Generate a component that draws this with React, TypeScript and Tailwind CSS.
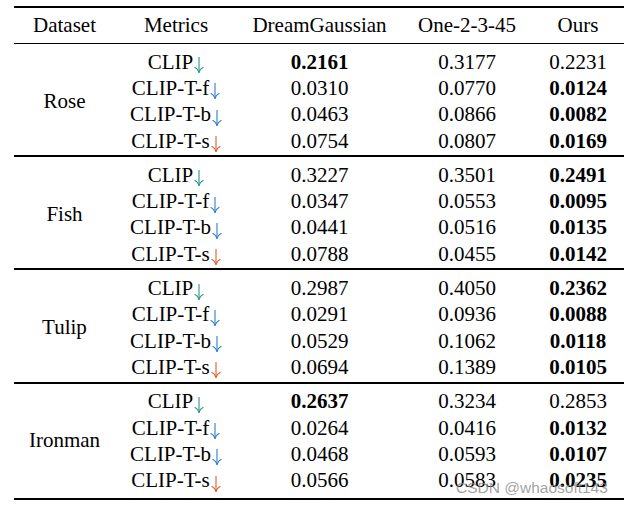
type Metric = "CLIP" | "CLIP-T-f" | "CLIP-T-b" | "CLIP-T-s";

const arrowColor: Record<Metric, string> = {
  CLIP: "text-[#2a9488]",
  "CLIP-T-f": "text-[#2f7fc6]",
  "CLIP-T-b": "text-[#2f7fc6]",
  "CLIP-T-s": "text-[#dd5d28]",
};

type Row = { metric: Metric; values: string[]; best: number };

const groups: { name: string; rows: Row[] }[] = [
  {
    name: "Rose",
    rows: [
      { metric: "CLIP", values: ["0.2161", "0.3177", "0.2231"], best: 0 },
      { metric: "CLIP-T-f", values: ["0.0310", "0.0770", "0.0124"], best: 2 },
      { metric: "CLIP-T-b", values: ["0.0463", "0.0866", "0.0082"], best: 2 },
      { metric: "CLIP-T-s", values: ["0.0754", "0.0807", "0.0169"], best: 2 },
    ],
  },
  {
    name: "Fish",
    rows: [
      { metric: "CLIP", values: ["0.3227", "0.3501", "0.2491"], best: 2 },
      { metric: "CLIP-T-f", values: ["0.0347", "0.0553", "0.0095"], best: 2 },
      { metric: "CLIP-T-b", values: ["0.0441", "0.0516", "0.0135"], best: 2 },
      { metric: "CLIP-T-s", values: ["0.0788", "0.0455", "0.0142"], best: 2 },
    ],
  },
  {
    name: "Tulip",
    rows: [
      { metric: "CLIP", values: ["0.2987", "0.4050", "0.2362"], best: 2 },
      { metric: "CLIP-T-f", values: ["0.0291", "0.0936", "0.0088"], best: 2 },
      { metric: "CLIP-T-b", values: ["0.0529", "0.1062", "0.0118"], best: 2 },
      { metric: "CLIP-T-s", values: ["0.0694", "0.1389", "0.0105"], best: 2 },
    ],
  },
  {
    name: "Ironman",
    rows: [
      { metric: "CLIP", values: ["0.2637", "0.3234", "0.2853"], best: 0 },
      { metric: "CLIP-T-f", values: ["0.0264", "0.0416", "0.0132"], best: 2 },
      { metric: "CLIP-T-b", values: ["0.0468", "0.0593", "0.0107"], best: 2 },
      { metric: "CLIP-T-s", values: ["0.0566", "0.0583", "0.0235"], best: 2 },
    ],
  },
];

const cols = "grid grid-cols-[101px_122px_165px_130px_92px]";

// LaTeX-style \downarrow
function DownArrow({ className }: { className: string }) {
  return (
    <svg
      viewBox="0 0 10 16"
      className={`w-[10px] h-[16px] mt-[6px] ml-[1px] shrink-0 ${className}`}
      fill="none"
      stroke="currentColor"
      strokeWidth={1.1}
      strokeLinecap="round"
    >
      <path d="M5 0.5V15.3" />
      <path d="M1 10.6Q4 12 5 15.5Q6 12 9 10.6" />
    </svg>
  );
}

export default function App() {
  return (
    <div className="relative w-[632px] h-[505px] bg-white overflow-hidden [font-family:'Liberation_Serif','Times_New_Roman',serif] text-[21px] text-black">
      <div className="ml-[14px] mt-[6px] w-[610px]">
        <div className={`${cols} h-[38px] pt-[1px] items-center border-t-2 border-b border-black`}>
          <div className="text-center">Dataset</div>
          <div className="text-center">Metrics</div>
          <div className="text-center">DreamGaussian</div>
          <div className="text-center">One-2-3-45</div>
          <div className="text-center">Ours</div>
        </div>
        {groups.map((g, gi) => (
          <div
            key={g.name}
            className={`${cols} border-b-2 border-black pt-[5px] ${gi === groups.length - 1 ? "pb-[4px]" : "pb-[1px]"}`}
          >
            <div className="row-span-4 flex items-center justify-center">{g.name}</div>
            {g.rows.map((r) => (
              <div key={r.metric} className="contents">
                <div className="h-[26.3px] flex items-center justify-center leading-none">
                  {r.metric}
                  <DownArrow className={arrowColor[r.metric]} />
                </div>
                {r.values.map((v, i) => (
                  <div
                    key={i}
                    className={`h-[26.3px] flex items-center justify-center leading-none ${i === r.best ? "font-bold" : ""}`}
                  >
                    {v}
                  </div>
                ))}
              </div>
            ))}
          </div>
        ))}
      </div>
      <div className="absolute left-[456px] top-[480px] [font-family:'Liberation_Sans',sans-serif] text-[15.5px] leading-none text-[#8a8a8a]/80">
        CSDN @whaosoft143
      </div>
    </div>
  );
}
